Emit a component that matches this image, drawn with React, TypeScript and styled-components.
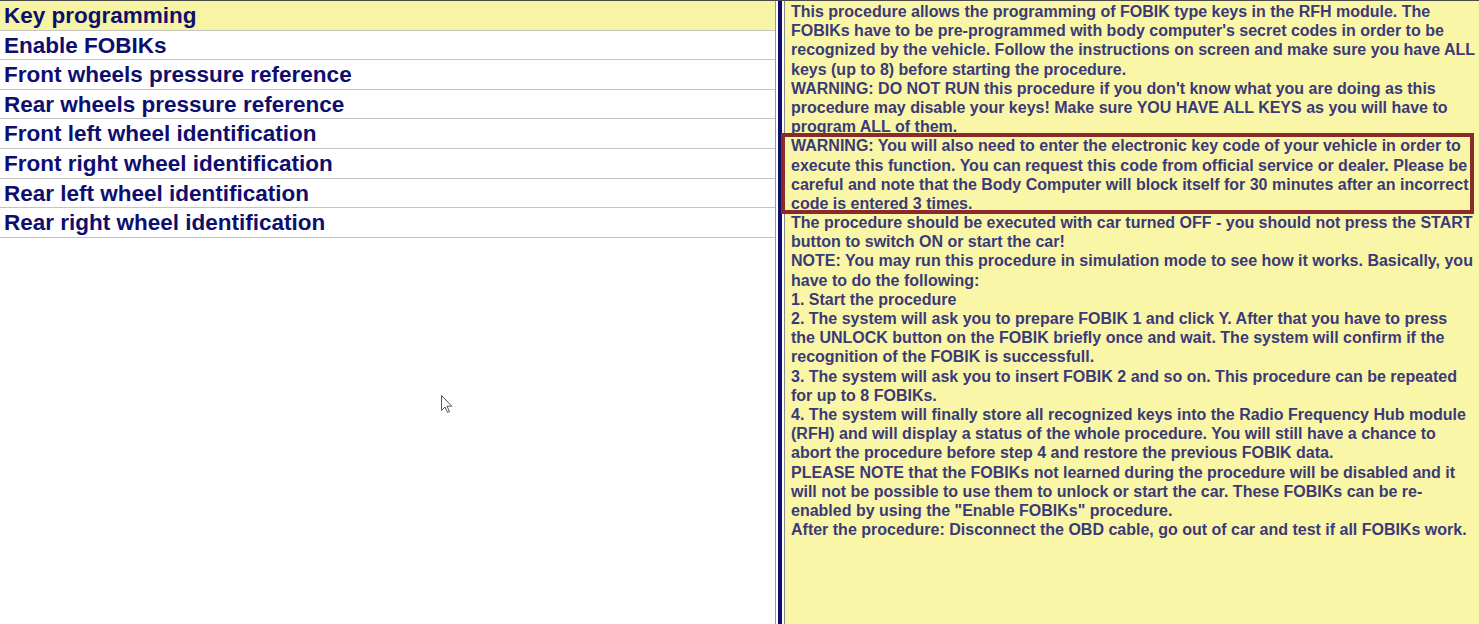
import React from "react";
import styled, { createGlobalStyle } from "styled-components";

const Global = createGlobalStyle`
  html, body { margin: 0; padding: 0; background: #ffffff; overflow: hidden; }
  #root { width: 1479px; height: 624px; }
`;

const Page = styled.div`
  display: flex;
  width: 1479px;
  height: 624px;
  border-top: 1px solid #4a4a4a;
  box-sizing: border-box;
  font-family: "Liberation Sans", Arial, sans-serif;
  position: relative;
  overflow: hidden;
`;

const LeftPanel = styled.div`
  width: 775px;
  flex: none;
  background: #ffffff;
  border-right: 1px solid #9a9a9a;
  display: flex;
  flex-direction: column;
`;

const Row = styled.div<{ $active?: boolean }>`
  height: 28.6px;
  border-bottom: 1px solid #c4c4c4;
  background: ${(p) => (p.$active ? "#f8f4a6" : "#ffffff")};
  color: #0e0e6e;
  font-weight: bold;
  font-size: 22.5px;
  line-height: 30.4px;
  padding-left: 4px;
  white-space: nowrap;
  overflow: visible;
`;

const Splitter = styled.div`
  width: 4px;
  flex: none;
  background: #10106a;
  border-left: 2px solid #ffffff;
  border-right: 2px solid #ffffff;
`;

const RightPanel = styled.div`
  flex: 1;
  position: relative;
  background: #faf6a8;
  border-left: 1px solid #8a8a8a;
  padding: 1px 0 0 6px;
`;

const Line = styled.div`
  color: #3a3a78;
  font-weight: bold;
  font-size: 16px;
  line-height: 19.19px;
  white-space: nowrap;
`;

const WarningBox = styled.div`
  position: absolute;
  left: -4px;
  top: 132px;
  width: 685px;
  height: 73px;
  border: 4px solid #8b2a2a;
  pointer-events: none;
`;

const Cursor = styled.svg`
  position: absolute;
  left: 441px;
  top: 394px;
  width: 12px;
  height: 19px;
`;

const items = [
  "Key programming",
  "Enable FOBIKs",
  "Front wheels pressure reference",
  "Rear wheels pressure reference",
  "Front left wheel identification",
  "Front right wheel identification",
  "Rear left wheel identification",
  "Rear right wheel identification",
];

const lines = [
  "This procedure allows the programming of FOBIK type keys in the RFH module. The",
  "FOBIKs have to be pre-programmed with body computer's secret codes in order to be",
  "recognized by the vehicle. Follow the instructions on screen and make sure you have ALL",
  "keys (up to 8) before starting the procedure.",
  "WARNING: DO NOT RUN this procedure if you don't know what you are doing as this",
  "procedure may disable your keys! Make sure YOU HAVE ALL KEYS as you will have to",
  "program ALL of them.",
  "WARNING: You will also need to enter the electronic key code of your vehicle in order to",
  "execute this function. You can request this code from official service or dealer. Please be",
  "careful and note that the Body Computer will block itself for 30 minutes after an incorrect",
  "code is entered 3 times.",
  "The procedure should be executed with car turned OFF - you should not press the START",
  "button to switch ON or start the car!",
  "NOTE: You may run this procedure in simulation mode to see how it works. Basically, you",
  "have to do the following:",
  "1. Start the procedure",
  "2. The system will ask you to prepare FOBIK 1 and click Y. After that you have to press",
  "the UNLOCK button on the FOBIK briefly once and wait. The system will confirm if the",
  "recognition of the FOBIK is successfull.",
  "3. The system will ask you to insert FOBIK 2 and so on. This procedure can be repeated",
  "for up to 8 FOBIKs.",
  "4. The system will finally store all recognized keys into the Radio Frequency Hub module",
  "(RFH) and will display a status of the whole procedure. You will still have a chance to",
  "abort the procedure before step 4 and restore the previous FOBIK data.",
  "PLEASE NOTE that the FOBIKs not learned during the procedure will be disabled and it",
  "will not be possible to use them to unlock or start the car. These FOBIKs can be re-",
  "enabled by using the \"Enable FOBIKs\" procedure.",
  "After the procedure: Disconnect the OBD cable, go out of car and test if all FOBIKs work.",
];

export default function App() {
  return (
    <>
      <Global />
      <Page>
        <LeftPanel>
          {items.map((t, i) => (
            <Row key={t} $active={i === 0}>
              {t}
            </Row>
          ))}
        </LeftPanel>
        <Splitter />
        <RightPanel>
          {lines.map((l, i) => (
            <Line key={i}>{l}</Line>
          ))}
          <WarningBox />
        </RightPanel>
        <Cursor viewBox="0 0 12 19">
          <path
            d="M0.5 0.5 L0.5 15.5 L4 12 L6.5 17.5 L8.5 16.6 L6 11.2 L10.8 11.2 Z"
            fill="#ffffff"
            stroke="#555555"
            strokeWidth="1"
            strokeLinejoin="round"
          />
        </Cursor>
      </Page>
    </>
  );
}
